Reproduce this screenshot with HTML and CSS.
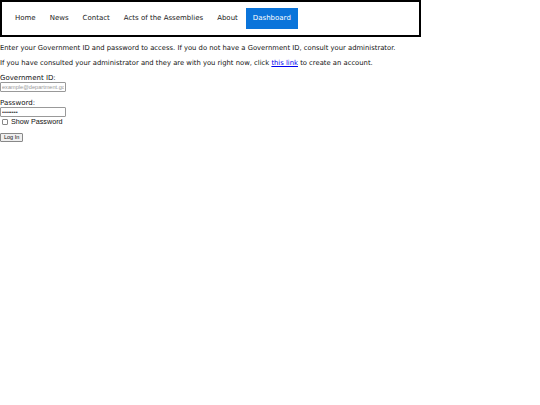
FILE: index.html
```html
<!DOCTYPE html>
<html lang="en">

<head>
    <meta charset="UTF-8">
    <meta name="viewport" content="width=device-width, initial-scale=1.0">
    <title>Log In</title>
    <link rel="stylesheet" href="styles.css">
</head>

<body>

    <nav class="topnav">
        <a href="#">Home</a>
        <a href="#">News</a>
        <a href="#">Contact</a>
        <a href="#">Acts of the Assemblies</a>
        <a href="#">About</a>
        <a href="#" class="active">Dashboard</a>
    </nav>

    <p>Enter your Government ID and password to access. If you do not have a Government ID, consult your administrator.</p>
    <p>If you have consulted your administrator and they are with you right now, click <a href="#">this link</a> to create an account.</p>

    <form class="login">
        <div class="field">
            <label for="gid">Government ID:</label>
            <input type="text" id="gid" placeholder="example@department.gov">
        </div>
        <div class="field">
            <label for="pwd">Password:</label>
            <input type="password" id="pwd" value="password">
        </div>
        <div class="show-row">
            <input type="checkbox" id="show">
            <label for="show">Show Password</label>
        </div>
        <button type="button">Log In</button>
    </form>

</body>

</html>
```

FILE: styles.css
```css
body {
    margin: 0;
    font-family: "DejaVu Sans", Verdana, sans-serif;
    font-size: 7px;
    line-height: 8px;
    color: #111;
    background: #fff;
}

.topnav {
    display: flex;
    width: 411px;
    padding: 6px 0 6px 6px;
    border: 2px solid #000;
    box-sizing: content-box;
}

.topnav a {
    padding: 6px 7px;
    line-height: 9px;
    color: #222;
    text-decoration: none;
}

.topnav a.active {
    margin-left: 1px;
    background-color: #0a74da;
    color: #fff;
}

p {
    margin: 7px 0;
    font-size: 6.8px;
}

p a {
    color: #0000ee;
}

.field {
    margin-bottom: 7px;
}

.field label {
    display: block;
}

.field input {
    display: block;
    width: 62px;
    height: 8px;
    padding: 0 1px;
    margin: 0;
    border: 1px solid #999;
    border-radius: 1px;
    font-family: "Liberation Sans", Arial, sans-serif;
    font-size: 5.6px;
    color: #333;
}

.field input::placeholder {
    color: #999;
}

.show-row {
    display: flex;
    align-items: center;
    margin-top: -7px;
    height: 9px;
}

.show-row input {
    appearance: none;
    width: 6px;
    height: 6px;
    margin: 0 3px 0 2px;
    border: 1px solid #888;
    border-radius: 1px;
    background: #fff;
    box-sizing: border-box;
}

.show-row label {
    font-family: "Liberation Sans", Arial, sans-serif;
    font-size: 7.2px;
}

.login button {
    margin-top: 7px;
    padding: 0 3px;
    height: 9px;
    font-family: "Liberation Sans", Arial, sans-serif;
    font-size: 5.5px;
    line-height: 7px;
    border: 1px solid #888;
    border-radius: 1px;
    background: #efefef;
    color: #111;
}
```
